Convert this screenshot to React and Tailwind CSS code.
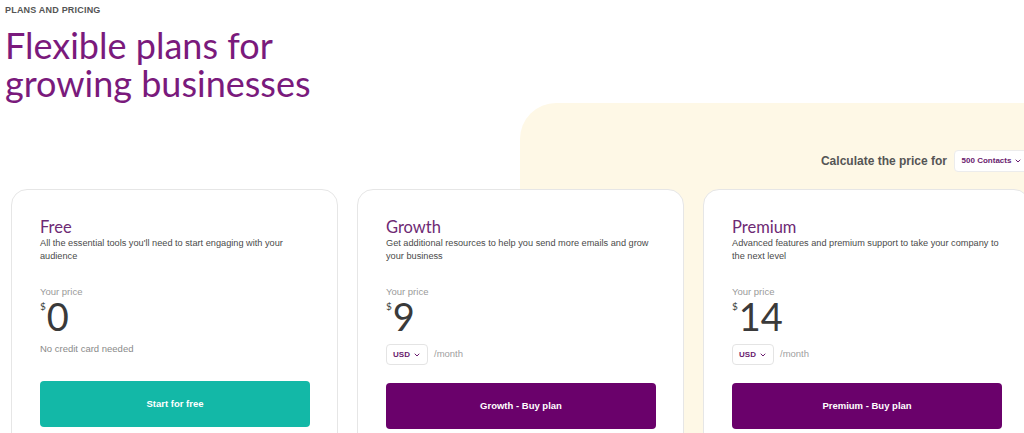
import React from "react";
import { ChevronDown } from "lucide-react";

function Card({ title, desc, price, footer, button, buttonClass, btnMt }) {
  return (
    <div className="w-[327px] shrink-0 h-[270px] rounded-[16px] border border-[#e6e6e6] bg-white px-[28px] pt-[27px]">
      <h2 className="font-['Lato',sans-serif] text-[16.5px] leading-[20px] text-[#6e2a74]">{title}</h2>
      <p className="text-[9.2px] leading-[13px] text-[#4a4a4a]">{desc}</p>
      <p className="mt-[22px] text-[9.5px] leading-[13px] text-[#9a9a9a]">Your price</p>
      <div className="flex items-start text-[#3a3a3a] font-['Lato',sans-serif]">
        <span className="text-[10px] leading-[12px] mt-[2px]">$</span>
        <span className="text-[38px] leading-[36px] ml-[1px]">{price}</span>
      </div>
      {footer}
      <button className={`w-[270px] h-[46px] rounded-[4px] text-white text-[9.5px] font-bold ${buttonClass} ${btnMt}`}>
        {button}
      </button>
    </div>
  );
}

function UsdRow() {
  return (
    <div className="mt-[10px] flex items-center gap-[6px]">
      <div className="h-[21px] w-[42px] rounded-[4px] border border-[#e4e4e4] bg-white flex items-center justify-center gap-[3px] text-[8px] font-bold text-[#6a1b6e]">
        USD <ChevronDown size={8} strokeWidth={3} />
      </div>
      <span className="text-[9.5px] text-[#a0a0a0]">/month</span>
    </div>
  );
}

export default function App() {
  return (
    <div className="relative w-[1024px] h-[433px] overflow-hidden bg-white font-['Liberation_Sans',Arial,sans-serif]">
      <div className="absolute left-[520px] top-[103px] right-0 bottom-0 rounded-tl-[36px] bg-[#fef8e6]" />
      <div className="relative">
        <div className="pl-[5px] pt-[4px]">
          <p className="text-[9px] leading-[12px] font-bold tracking-[0.2px] text-[#555]">PLANS AND PRICING</p>
          <h1 className="mt-[10px] font-['Lato',sans-serif] text-[36px] leading-[38px] text-[#7a1a7c]">
            Flexible plans for
            <br />
            growing businesses
          </h1>
        </div>
        <div className="mt-[48px] flex justify-end items-center gap-[7px] mr-[-6px]">
          <span className="text-[12px] font-bold text-[#555]">Calculate the price for</span>
          <div className="h-[22px] w-[76px] rounded-[4px] border border-[#ececec] bg-white flex items-center justify-center gap-[3px] text-[8px] font-bold text-[#6a1b6e]">
            500 Contacts <ChevronDown size={8} strokeWidth={3} />
          </div>
        </div>
        <div className="mt-[17px] flex gap-[19px] pl-[11px]">
          <Card
            title="Free"
            desc="All the essential tools you'll need to start engaging with your audience"
            price="0"
            footer={<p className="mt-[8px] text-[9.5px] text-[#8a8a8a]">No credit card needed</p>}
            button="Start for free"
            buttonClass="bg-[#13b8a7]"
            btnMt="mt-[25px]"
          />
          <Card
            title="Growth"
            desc="Get additional resources to help you send more emails and grow your business"
            price="9"
            footer={<UsdRow />}
            button="Growth - Buy plan"
            buttonClass="bg-[#6a016b]"
            btnMt="mt-[18px]"
          />
          <Card
            title="Premium"
            desc="Advanced features and premium support to take your company to the next level"
            price="14"
            footer={<UsdRow />}
            button="Premium - Buy plan"
            buttonClass="bg-[#6a016b]"
            btnMt="mt-[18px]"
          />
        </div>
      </div>
    </div>
  );
}
